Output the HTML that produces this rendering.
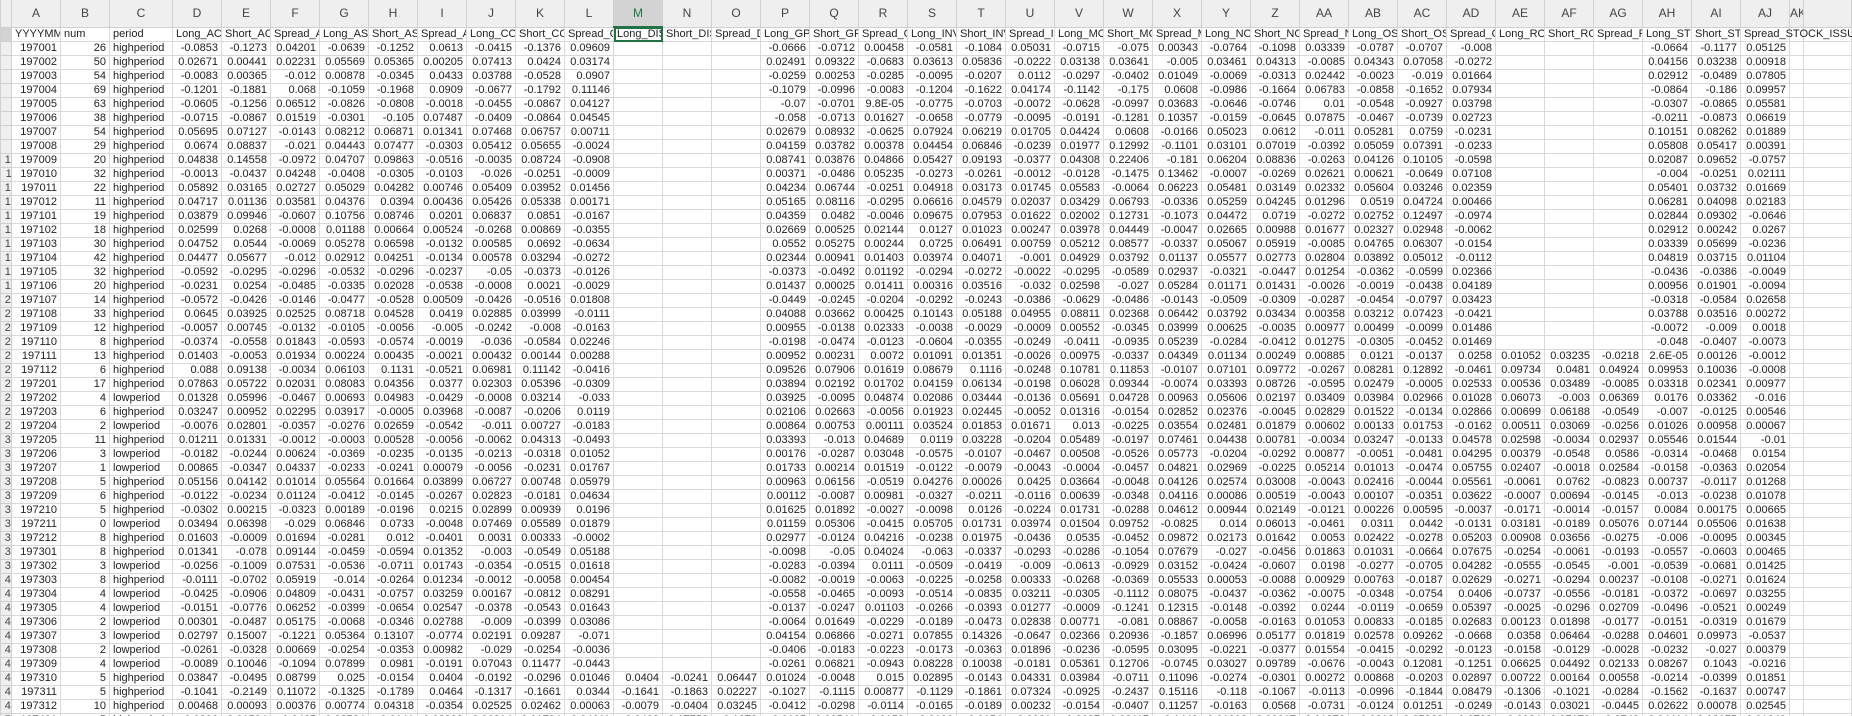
<!DOCTYPE html>
<html><head><meta charset="utf-8"><style>
html,body{margin:0;padding:0;background:#fff;width:1852px;height:716px;overflow:hidden}
table{border-collapse:collapse;table-layout:fixed;font-family:"Liberation Sans",sans-serif;font-size:11px;color:#222;width:1852px}
td,th{padding:0 3px 0 2px;height:13px;line-height:13px;border:1px solid #d9d9d9;white-space:nowrap;overflow:hidden;text-align:right}
thead th{height:22px;line-height:26px;background:#efefef;color:#444;font-weight:normal;font-size:12px;text-align:center;border:1px solid #d0d0d0;border-top:none;padding:0}
tbody th{background:#efefef;color:#444;font-weight:normal;text-align:right;padding:0;border-color:#d0d0d0;direction:rtl;text-indent:-6px}
td.l{text-align:left;padding-left:3px}
tr.h td{text-align:left;padding-left:3px}
th.sel{background:#d3d3d3;color:#217346;border-bottom:2px solid #217346}
td.cur{outline:2px solid #217346;outline-offset:-2px;position:relative}
td.vis{overflow:visible}
</style></head><body>
<table>
<colgroup><col style="width:11px"><col style="width:49px"><col style="width:49px"><col style="width:63px">
<col style="width:49px"><col style="width:49px"><col style="width:49px"><col style="width:49px"><col style="width:49px"><col style="width:49px"><col style="width:49px"><col style="width:49px"><col style="width:49px"><col style="width:49px"><col style="width:49px"><col style="width:49px"><col style="width:49px"><col style="width:49px"><col style="width:49px"><col style="width:49px"><col style="width:49px"><col style="width:49px"><col style="width:49px"><col style="width:49px"><col style="width:49px"><col style="width:49px"><col style="width:49px"><col style="width:49px"><col style="width:49px"><col style="width:49px"><col style="width:49px"><col style="width:49px"><col style="width:49px"><col style="width:49px"><col style="width:49px"><col style="width:49px"><col style="width:49px"><col style="width:14px"></colgroup>
<thead><tr><th></th><th>A</th><th>B</th><th>C</th><th>D</th><th>E</th><th>F</th><th>G</th><th>H</th><th>I</th><th>J</th><th>K</th><th>L</th><th class="sel">M</th><th>N</th><th>O</th><th>P</th><th>Q</th><th>R</th><th>S</th><th>T</th><th>U</th><th>V</th><th>W</th><th>X</th><th>Y</th><th>Z</th><th>AA</th><th>AB</th><th>AC</th><th>AD</th><th>AE</th><th>AF</th><th>AG</th><th>AH</th><th>AI</th><th>AJ</th><th>AK</th><th></th></tr></thead>
<tbody>
<tr class="h"><th style="background:#d3d3d3">1</th><td>YYYYMM</td><td>num</td><td>period</td><td>Long_ACCRUALS</td><td>Short_ACCRUALS</td><td>Spread_ACCRUALS</td><td>Long_ASSET</td><td>Short_ASSET</td><td>Spread_ASSET</td><td>Long_COMP</td><td>Short_COMP</td><td>Spread_COMP</td><td class="cur">Long_DISTRESS</td><td>Short_DISTRESS</td><td>Spread_DISTRESS</td><td>Long_GP_A</td><td>Short_GP_A</td><td>Spread_GP</td><td>Long_INV</td><td>Short_INV</td><td>Spread_INV</td><td>Long_MOM</td><td>Short_MOM</td><td>Spread_MOM</td><td>Long_NOA</td><td>Short_NOA</td><td>Spread_NOA</td><td>Long_OSCORE</td><td>Short_OSCORE</td><td>Spread_OSCORE</td><td>Long_ROA</td><td>Short_ROA</td><td>Spread_ROA</td><td>Long_STOCK</td><td>Short_STOCK</td><td class="vis">Spread_STOCK_ISSUE</td><td style="border-left-color:transparent"></td><td></td></tr>
<tr><th>2</th><td>197001</td><td>26</td><td class="l">highperiod</td><td>-0.0853</td><td>-0.1273</td><td>0.04201</td><td>-0.0639</td><td>-0.1252</td><td>0.0613</td><td>-0.0415</td><td>-0.1376</td><td>0.09609</td><td></td><td></td><td></td><td>-0.0666</td><td>-0.0712</td><td>0.00458</td><td>-0.0581</td><td>-0.1084</td><td>0.05031</td><td>-0.0715</td><td>-0.075</td><td>0.00343</td><td>-0.0764</td><td>-0.1098</td><td>0.03339</td><td>-0.0787</td><td>-0.0707</td><td>-0.008</td><td></td><td></td><td></td><td>-0.0664</td><td>-0.1177</td><td>0.05125</td><td></td><td></td></tr>
<tr><th>3</th><td>197002</td><td>50</td><td class="l">highperiod</td><td>0.02671</td><td>0.00441</td><td>0.02231</td><td>0.05569</td><td>0.05365</td><td>0.00205</td><td>0.07413</td><td>0.0424</td><td>0.03174</td><td></td><td></td><td></td><td>0.02491</td><td>0.09322</td><td>-0.0683</td><td>0.03613</td><td>0.05836</td><td>-0.0222</td><td>0.03138</td><td>0.03641</td><td>-0.005</td><td>0.03461</td><td>0.04313</td><td>-0.0085</td><td>0.04343</td><td>0.07058</td><td>-0.0272</td><td></td><td></td><td></td><td>0.04156</td><td>0.03238</td><td>0.00918</td><td></td><td></td></tr>
<tr><th>4</th><td>197003</td><td>54</td><td class="l">highperiod</td><td>-0.0083</td><td>0.00365</td><td>-0.012</td><td>0.00878</td><td>-0.0345</td><td>0.0433</td><td>0.03788</td><td>-0.0528</td><td>0.0907</td><td></td><td></td><td></td><td>-0.0259</td><td>0.00253</td><td>-0.0285</td><td>-0.0095</td><td>-0.0207</td><td>0.0112</td><td>-0.0297</td><td>-0.0402</td><td>0.01049</td><td>-0.0069</td><td>-0.0313</td><td>0.02442</td><td>-0.0023</td><td>-0.019</td><td>0.01664</td><td></td><td></td><td></td><td>0.02912</td><td>-0.0489</td><td>0.07805</td><td></td><td></td></tr>
<tr><th>5</th><td>197004</td><td>69</td><td class="l">highperiod</td><td>-0.1201</td><td>-0.1881</td><td>0.068</td><td>-0.1059</td><td>-0.1968</td><td>0.0909</td><td>-0.0677</td><td>-0.1792</td><td>0.11146</td><td></td><td></td><td></td><td>-0.1079</td><td>-0.0996</td><td>-0.0083</td><td>-0.1204</td><td>-0.1622</td><td>0.04174</td><td>-0.1142</td><td>-0.175</td><td>0.0608</td><td>-0.0986</td><td>-0.1664</td><td>0.06783</td><td>-0.0858</td><td>-0.1652</td><td>0.07934</td><td></td><td></td><td></td><td>-0.0864</td><td>-0.186</td><td>0.09957</td><td></td><td></td></tr>
<tr><th>6</th><td>197005</td><td>63</td><td class="l">highperiod</td><td>-0.0605</td><td>-0.1256</td><td>0.06512</td><td>-0.0826</td><td>-0.0808</td><td>-0.0018</td><td>-0.0455</td><td>-0.0867</td><td>0.04127</td><td></td><td></td><td></td><td>-0.07</td><td>-0.0701</td><td>9.8E-05</td><td>-0.0775</td><td>-0.0703</td><td>-0.0072</td><td>-0.0628</td><td>-0.0997</td><td>0.03683</td><td>-0.0646</td><td>-0.0746</td><td>0.01</td><td>-0.0548</td><td>-0.0927</td><td>0.03798</td><td></td><td></td><td></td><td>-0.0307</td><td>-0.0865</td><td>0.05581</td><td></td><td></td></tr>
<tr><th>7</th><td>197006</td><td>38</td><td class="l">highperiod</td><td>-0.0715</td><td>-0.0867</td><td>0.01519</td><td>-0.0301</td><td>-0.105</td><td>0.07487</td><td>-0.0409</td><td>-0.0864</td><td>0.04545</td><td></td><td></td><td></td><td>-0.058</td><td>-0.0713</td><td>0.01627</td><td>-0.0658</td><td>-0.0779</td><td>-0.0095</td><td>-0.0191</td><td>-0.1281</td><td>0.10357</td><td>-0.0159</td><td>-0.0645</td><td>0.07875</td><td>-0.0467</td><td>-0.0739</td><td>0.02723</td><td></td><td></td><td></td><td>-0.0211</td><td>-0.0873</td><td>0.06619</td><td></td><td></td></tr>
<tr><th>8</th><td>197007</td><td>54</td><td class="l">highperiod</td><td>0.05695</td><td>0.07127</td><td>-0.0143</td><td>0.08212</td><td>0.06871</td><td>0.01341</td><td>0.07468</td><td>0.06757</td><td>0.00711</td><td></td><td></td><td></td><td>0.02679</td><td>0.08932</td><td>-0.0625</td><td>0.07924</td><td>0.06219</td><td>0.01705</td><td>0.04424</td><td>0.0608</td><td>-0.0166</td><td>0.05023</td><td>0.0612</td><td>-0.011</td><td>0.05281</td><td>0.0759</td><td>-0.0231</td><td></td><td></td><td></td><td>0.10151</td><td>0.08262</td><td>0.01889</td><td></td><td></td></tr>
<tr><th>9</th><td>197008</td><td>29</td><td class="l">highperiod</td><td>0.0674</td><td>0.08837</td><td>-0.021</td><td>0.04443</td><td>0.07477</td><td>-0.0303</td><td>0.05412</td><td>0.05655</td><td>-0.0024</td><td></td><td></td><td></td><td>0.04159</td><td>0.03782</td><td>0.00378</td><td>0.04454</td><td>0.06846</td><td>-0.0239</td><td>0.01977</td><td>0.12992</td><td>-0.1101</td><td>0.03101</td><td>0.07019</td><td>-0.0392</td><td>0.05059</td><td>0.07391</td><td>-0.0233</td><td></td><td></td><td></td><td>0.05808</td><td>0.05417</td><td>0.00391</td><td></td><td></td></tr>
<tr><th>10</th><td>197009</td><td>20</td><td class="l">highperiod</td><td>0.04838</td><td>0.14558</td><td>-0.0972</td><td>0.04707</td><td>0.09863</td><td>-0.0516</td><td>-0.0035</td><td>0.08724</td><td>-0.0908</td><td></td><td></td><td></td><td>0.08741</td><td>0.03876</td><td>0.04866</td><td>0.05427</td><td>0.09193</td><td>-0.0377</td><td>0.04308</td><td>0.22406</td><td>-0.181</td><td>0.06204</td><td>0.08836</td><td>-0.0263</td><td>0.04126</td><td>0.10105</td><td>-0.0598</td><td></td><td></td><td></td><td>0.02087</td><td>0.09652</td><td>-0.0757</td><td></td><td></td></tr>
<tr><th>11</th><td>197010</td><td>32</td><td class="l">highperiod</td><td>-0.0013</td><td>-0.0437</td><td>0.04248</td><td>-0.0408</td><td>-0.0305</td><td>-0.0103</td><td>-0.026</td><td>-0.0251</td><td>-0.0009</td><td></td><td></td><td></td><td>0.00371</td><td>-0.0486</td><td>0.05235</td><td>-0.0273</td><td>-0.0261</td><td>-0.0012</td><td>-0.0128</td><td>-0.1475</td><td>0.13462</td><td>-0.0007</td><td>-0.0269</td><td>0.02621</td><td>0.00621</td><td>-0.0649</td><td>0.07108</td><td></td><td></td><td></td><td>-0.004</td><td>-0.0251</td><td>0.02111</td><td></td><td></td></tr>
<tr><th>12</th><td>197011</td><td>22</td><td class="l">highperiod</td><td>0.05892</td><td>0.03165</td><td>0.02727</td><td>0.05029</td><td>0.04282</td><td>0.00746</td><td>0.05409</td><td>0.03952</td><td>0.01456</td><td></td><td></td><td></td><td>0.04234</td><td>0.06744</td><td>-0.0251</td><td>0.04918</td><td>0.03173</td><td>0.01745</td><td>0.05583</td><td>-0.0064</td><td>0.06223</td><td>0.05481</td><td>0.03149</td><td>0.02332</td><td>0.05604</td><td>0.03246</td><td>0.02359</td><td></td><td></td><td></td><td>0.05401</td><td>0.03732</td><td>0.01669</td><td></td><td></td></tr>
<tr><th>13</th><td>197012</td><td>11</td><td class="l">highperiod</td><td>0.04717</td><td>0.01136</td><td>0.03581</td><td>0.04376</td><td>0.0394</td><td>0.00436</td><td>0.05426</td><td>0.05338</td><td>0.00171</td><td></td><td></td><td></td><td>0.05165</td><td>0.08116</td><td>-0.0295</td><td>0.06616</td><td>0.04579</td><td>0.02037</td><td>0.03429</td><td>0.06793</td><td>-0.0336</td><td>0.05259</td><td>0.04245</td><td>0.01296</td><td>0.0519</td><td>0.04724</td><td>0.00466</td><td></td><td></td><td></td><td>0.06281</td><td>0.04098</td><td>0.02183</td><td></td><td></td></tr>
<tr><th>14</th><td>197101</td><td>19</td><td class="l">highperiod</td><td>0.03879</td><td>0.09946</td><td>-0.0607</td><td>0.10756</td><td>0.08746</td><td>0.0201</td><td>0.06837</td><td>0.0851</td><td>-0.0167</td><td></td><td></td><td></td><td>0.04359</td><td>0.0482</td><td>-0.0046</td><td>0.09675</td><td>0.07953</td><td>0.01622</td><td>0.02002</td><td>0.12731</td><td>-0.1073</td><td>0.04472</td><td>0.0719</td><td>-0.0272</td><td>0.02752</td><td>0.12497</td><td>-0.0974</td><td></td><td></td><td></td><td>0.02844</td><td>0.09302</td><td>-0.0646</td><td></td><td></td></tr>
<tr><th>15</th><td>197102</td><td>18</td><td class="l">highperiod</td><td>0.02599</td><td>0.0268</td><td>-0.0008</td><td>0.01188</td><td>0.00664</td><td>0.00524</td><td>-0.0268</td><td>0.00869</td><td>-0.0355</td><td></td><td></td><td></td><td>0.02669</td><td>0.00525</td><td>0.02144</td><td>0.0127</td><td>0.01023</td><td>0.00247</td><td>0.03978</td><td>0.04449</td><td>-0.0047</td><td>0.02665</td><td>0.00988</td><td>0.01677</td><td>0.02327</td><td>0.02948</td><td>-0.0062</td><td></td><td></td><td></td><td>0.02912</td><td>0.00242</td><td>0.0267</td><td></td><td></td></tr>
<tr><th>16</th><td>197103</td><td>30</td><td class="l">highperiod</td><td>0.04752</td><td>0.0544</td><td>-0.0069</td><td>0.05278</td><td>0.06598</td><td>-0.0132</td><td>0.00585</td><td>0.0692</td><td>-0.0634</td><td></td><td></td><td></td><td>0.0552</td><td>0.05275</td><td>0.00244</td><td>0.0725</td><td>0.06491</td><td>0.00759</td><td>0.05212</td><td>0.08577</td><td>-0.0337</td><td>0.05067</td><td>0.05919</td><td>-0.0085</td><td>0.04765</td><td>0.06307</td><td>-0.0154</td><td></td><td></td><td></td><td>0.03339</td><td>0.05699</td><td>-0.0236</td><td></td><td></td></tr>
<tr><th>17</th><td>197104</td><td>42</td><td class="l">highperiod</td><td>0.04477</td><td>0.05677</td><td>-0.012</td><td>0.02912</td><td>0.04251</td><td>-0.0134</td><td>0.00578</td><td>0.03294</td><td>-0.0272</td><td></td><td></td><td></td><td>0.02344</td><td>0.00941</td><td>0.01403</td><td>0.03974</td><td>0.04071</td><td>-0.001</td><td>0.04929</td><td>0.03792</td><td>0.01137</td><td>0.05577</td><td>0.02773</td><td>0.02804</td><td>0.03892</td><td>0.05012</td><td>-0.0112</td><td></td><td></td><td></td><td>0.04819</td><td>0.03715</td><td>0.01104</td><td></td><td></td></tr>
<tr><th>18</th><td>197105</td><td>32</td><td class="l">highperiod</td><td>-0.0592</td><td>-0.0295</td><td>-0.0296</td><td>-0.0532</td><td>-0.0296</td><td>-0.0237</td><td>-0.05</td><td>-0.0373</td><td>-0.0126</td><td></td><td></td><td></td><td>-0.0373</td><td>-0.0492</td><td>0.01192</td><td>-0.0294</td><td>-0.0272</td><td>-0.0022</td><td>-0.0295</td><td>-0.0589</td><td>0.02937</td><td>-0.0321</td><td>-0.0447</td><td>0.01254</td><td>-0.0362</td><td>-0.0599</td><td>0.02366</td><td></td><td></td><td></td><td>-0.0436</td><td>-0.0386</td><td>-0.0049</td><td></td><td></td></tr>
<tr><th>19</th><td>197106</td><td>20</td><td class="l">highperiod</td><td>-0.0231</td><td>0.0254</td><td>-0.0485</td><td>-0.0335</td><td>0.02028</td><td>-0.0538</td><td>-0.0008</td><td>0.0021</td><td>-0.0029</td><td></td><td></td><td></td><td>0.01437</td><td>0.00025</td><td>0.01411</td><td>0.00316</td><td>0.03516</td><td>-0.032</td><td>0.02598</td><td>-0.027</td><td>0.05284</td><td>0.01171</td><td>0.01431</td><td>-0.0026</td><td>-0.0019</td><td>-0.0438</td><td>0.04189</td><td></td><td></td><td></td><td>0.00956</td><td>0.01901</td><td>-0.0094</td><td></td><td></td></tr>
<tr><th>20</th><td>197107</td><td>14</td><td class="l">highperiod</td><td>-0.0572</td><td>-0.0426</td><td>-0.0146</td><td>-0.0477</td><td>-0.0528</td><td>0.00509</td><td>-0.0426</td><td>-0.0516</td><td>0.01808</td><td></td><td></td><td></td><td>-0.0449</td><td>-0.0245</td><td>-0.0204</td><td>-0.0292</td><td>-0.0243</td><td>-0.0386</td><td>-0.0629</td><td>-0.0486</td><td>-0.0143</td><td>-0.0509</td><td>-0.0309</td><td>-0.0287</td><td>-0.0454</td><td>-0.0797</td><td>0.03423</td><td></td><td></td><td></td><td>-0.0318</td><td>-0.0584</td><td>0.02658</td><td></td><td></td></tr>
<tr><th>21</th><td>197108</td><td>33</td><td class="l">highperiod</td><td>0.0645</td><td>0.03925</td><td>0.02525</td><td>0.08718</td><td>0.04528</td><td>0.0419</td><td>0.02885</td><td>0.03999</td><td>-0.0111</td><td></td><td></td><td></td><td>0.04088</td><td>0.03662</td><td>0.00425</td><td>0.10143</td><td>0.05188</td><td>0.04955</td><td>0.08811</td><td>0.02368</td><td>0.06442</td><td>0.03792</td><td>0.03434</td><td>0.00358</td><td>0.03212</td><td>0.07423</td><td>-0.0421</td><td></td><td></td><td></td><td>0.03788</td><td>0.03516</td><td>0.00272</td><td></td><td></td></tr>
<tr><th>22</th><td>197109</td><td>12</td><td class="l">highperiod</td><td>-0.0057</td><td>0.00745</td><td>-0.0132</td><td>-0.0105</td><td>-0.0056</td><td>-0.005</td><td>-0.0242</td><td>-0.008</td><td>-0.0163</td><td></td><td></td><td></td><td>0.00955</td><td>-0.0138</td><td>0.02333</td><td>-0.0038</td><td>-0.0029</td><td>-0.0009</td><td>0.00552</td><td>-0.0345</td><td>0.03999</td><td>0.00625</td><td>-0.0035</td><td>0.00977</td><td>0.00499</td><td>-0.0099</td><td>0.01486</td><td></td><td></td><td></td><td>-0.0072</td><td>-0.009</td><td>0.0018</td><td></td><td></td></tr>
<tr><th>23</th><td>197110</td><td>8</td><td class="l">highperiod</td><td>-0.0374</td><td>-0.0558</td><td>0.01843</td><td>-0.0593</td><td>-0.0574</td><td>-0.0019</td><td>-0.036</td><td>-0.0584</td><td>0.02246</td><td></td><td></td><td></td><td>-0.0198</td><td>-0.0474</td><td>-0.0123</td><td>-0.0604</td><td>-0.0355</td><td>-0.0249</td><td>-0.0411</td><td>-0.0935</td><td>0.05239</td><td>-0.0284</td><td>-0.0412</td><td>0.01275</td><td>-0.0305</td><td>-0.0452</td><td>0.01469</td><td></td><td></td><td></td><td>-0.048</td><td>-0.0407</td><td>-0.0073</td><td></td><td></td></tr>
<tr><th>24</th><td>197111</td><td>13</td><td class="l">highperiod</td><td>0.01403</td><td>-0.0053</td><td>0.01934</td><td>0.00224</td><td>0.00435</td><td>-0.0021</td><td>0.00432</td><td>0.00144</td><td>0.00288</td><td></td><td></td><td></td><td>0.00952</td><td>0.00231</td><td>0.0072</td><td>0.01091</td><td>0.01351</td><td>-0.0026</td><td>0.00975</td><td>-0.0337</td><td>0.04349</td><td>0.01134</td><td>0.00249</td><td>0.00885</td><td>0.0121</td><td>-0.0137</td><td>0.0258</td><td>0.01052</td><td>0.03235</td><td>-0.0218</td><td>2.6E-05</td><td>0.00126</td><td>-0.0012</td><td></td><td></td></tr>
<tr><th>25</th><td>197112</td><td>6</td><td class="l">highperiod</td><td>0.088</td><td>0.09138</td><td>-0.0034</td><td>0.06103</td><td>0.1131</td><td>-0.0521</td><td>0.06981</td><td>0.11142</td><td>-0.0416</td><td></td><td></td><td></td><td>0.09526</td><td>0.07906</td><td>0.01619</td><td>0.08679</td><td>0.1116</td><td>-0.0248</td><td>0.10781</td><td>0.11853</td><td>-0.0107</td><td>0.07101</td><td>0.09772</td><td>-0.0267</td><td>0.08281</td><td>0.12892</td><td>-0.0461</td><td>0.09734</td><td>0.0481</td><td>0.04924</td><td>0.09953</td><td>0.10036</td><td>-0.0008</td><td></td><td></td></tr>
<tr><th>26</th><td>197201</td><td>17</td><td class="l">highperiod</td><td>0.07863</td><td>0.05722</td><td>0.02031</td><td>0.08083</td><td>0.04356</td><td>0.0377</td><td>0.02303</td><td>0.05396</td><td>-0.0309</td><td></td><td></td><td></td><td>0.03894</td><td>0.02192</td><td>0.01702</td><td>0.04159</td><td>0.06134</td><td>-0.0198</td><td>0.06028</td><td>0.09344</td><td>-0.0074</td><td>0.03393</td><td>0.08726</td><td>-0.0595</td><td>0.02479</td><td>-0.0005</td><td>0.02533</td><td>0.00536</td><td>0.03489</td><td>-0.0085</td><td>0.03318</td><td>0.02341</td><td>0.00977</td><td></td><td></td></tr>
<tr><th>27</th><td>197202</td><td>4</td><td class="l">lowperiod</td><td>0.01328</td><td>0.05996</td><td>-0.0467</td><td>0.00693</td><td>0.04983</td><td>-0.0429</td><td>-0.0008</td><td>0.03214</td><td>-0.033</td><td></td><td></td><td></td><td>0.03925</td><td>-0.0095</td><td>0.04874</td><td>0.02086</td><td>0.03444</td><td>-0.0136</td><td>0.05691</td><td>0.04728</td><td>0.00963</td><td>0.05606</td><td>0.02197</td><td>0.03409</td><td>0.03984</td><td>0.02966</td><td>0.01028</td><td>0.06073</td><td>-0.003</td><td>0.06369</td><td>0.0176</td><td>0.03362</td><td>-0.016</td><td></td><td></td></tr>
<tr><th>28</th><td>197203</td><td>6</td><td class="l">highperiod</td><td>0.03247</td><td>0.00952</td><td>0.02295</td><td>0.03917</td><td>-0.0005</td><td>0.03968</td><td>-0.0087</td><td>-0.0206</td><td>0.0119</td><td></td><td></td><td></td><td>0.02106</td><td>0.02663</td><td>-0.0056</td><td>0.01923</td><td>0.02445</td><td>-0.0052</td><td>0.01316</td><td>-0.0154</td><td>0.02852</td><td>0.02376</td><td>-0.0045</td><td>0.02829</td><td>0.01522</td><td>-0.0134</td><td>0.02866</td><td>0.00699</td><td>0.06188</td><td>-0.0549</td><td>-0.007</td><td>-0.0125</td><td>0.00546</td><td></td><td></td></tr>
<tr><th>29</th><td>197204</td><td>2</td><td class="l">lowperiod</td><td>-0.0076</td><td>0.02801</td><td>-0.0357</td><td>-0.0276</td><td>0.02659</td><td>-0.0542</td><td>-0.011</td><td>0.00727</td><td>-0.0183</td><td></td><td></td><td></td><td>0.00864</td><td>0.00753</td><td>0.00111</td><td>0.03524</td><td>0.01853</td><td>0.01671</td><td>0.013</td><td>-0.0225</td><td>0.03554</td><td>0.02481</td><td>0.01879</td><td>0.00602</td><td>0.00133</td><td>0.01753</td><td>-0.0162</td><td>0.00511</td><td>0.03069</td><td>-0.0256</td><td>0.01026</td><td>0.00958</td><td>0.00067</td><td></td><td></td></tr>
<tr><th>30</th><td>197205</td><td>11</td><td class="l">highperiod</td><td>0.01211</td><td>0.01331</td><td>-0.0012</td><td>-0.0003</td><td>0.00528</td><td>-0.0056</td><td>-0.0062</td><td>0.04313</td><td>-0.0493</td><td></td><td></td><td></td><td>0.03393</td><td>-0.013</td><td>0.04689</td><td>0.0119</td><td>0.03228</td><td>-0.0204</td><td>0.05489</td><td>-0.0197</td><td>0.07461</td><td>0.04438</td><td>0.00781</td><td>-0.0034</td><td>0.03247</td><td>-0.0133</td><td>0.04578</td><td>0.02598</td><td>-0.0034</td><td>0.02937</td><td>0.05546</td><td>0.01544</td><td>-0.01</td><td></td><td></td></tr>
<tr><th>31</th><td>197206</td><td>3</td><td class="l">lowperiod</td><td>-0.0182</td><td>-0.0244</td><td>0.00624</td><td>-0.0369</td><td>-0.0235</td><td>-0.0135</td><td>-0.0213</td><td>-0.0318</td><td>0.01052</td><td></td><td></td><td></td><td>0.00176</td><td>-0.0287</td><td>0.03048</td><td>-0.0575</td><td>-0.0107</td><td>-0.0467</td><td>0.00508</td><td>-0.0526</td><td>0.05773</td><td>-0.0204</td><td>-0.0292</td><td>0.00877</td><td>-0.0051</td><td>-0.0481</td><td>0.04295</td><td>0.00379</td><td>-0.0548</td><td>0.0586</td><td>-0.0314</td><td>-0.0468</td><td>0.0154</td><td></td><td></td></tr>
<tr><th>32</th><td>197207</td><td>1</td><td class="l">lowperiod</td><td>0.00865</td><td>-0.0347</td><td>0.04337</td><td>-0.0233</td><td>-0.0241</td><td>0.00079</td><td>-0.0056</td><td>-0.0231</td><td>0.01767</td><td></td><td></td><td></td><td>0.01733</td><td>0.00214</td><td>0.01519</td><td>-0.0122</td><td>-0.0079</td><td>-0.0043</td><td>-0.0004</td><td>-0.0457</td><td>0.04821</td><td>0.02969</td><td>-0.0225</td><td>0.05214</td><td>0.01013</td><td>-0.0474</td><td>0.05755</td><td>0.02407</td><td>-0.0018</td><td>0.02584</td><td>-0.0158</td><td>-0.0363</td><td>0.02054</td><td></td><td></td></tr>
<tr><th>33</th><td>197208</td><td>5</td><td class="l">highperiod</td><td>0.05156</td><td>0.04142</td><td>0.01014</td><td>0.05564</td><td>0.01664</td><td>0.03899</td><td>0.06727</td><td>0.00748</td><td>0.05979</td><td></td><td></td><td></td><td>0.00963</td><td>0.06156</td><td>-0.0519</td><td>0.04276</td><td>0.00026</td><td>0.0425</td><td>0.03664</td><td>-0.0048</td><td>0.04126</td><td>0.02574</td><td>0.03008</td><td>-0.0043</td><td>0.02416</td><td>-0.0044</td><td>0.05561</td><td>-0.0061</td><td>0.0762</td><td>-0.0823</td><td>0.00737</td><td>-0.0117</td><td>0.01268</td><td></td><td></td></tr>
<tr><th>34</th><td>197209</td><td>6</td><td class="l">highperiod</td><td>-0.0122</td><td>-0.0234</td><td>0.01124</td><td>-0.0412</td><td>-0.0145</td><td>-0.0267</td><td>0.02823</td><td>-0.0181</td><td>0.04634</td><td></td><td></td><td></td><td>0.00112</td><td>-0.0087</td><td>0.00981</td><td>-0.0327</td><td>-0.0211</td><td>-0.0116</td><td>0.00639</td><td>-0.0348</td><td>0.04116</td><td>0.00086</td><td>0.00519</td><td>-0.0043</td><td>0.00107</td><td>-0.0351</td><td>0.03622</td><td>-0.0007</td><td>0.00694</td><td>-0.0145</td><td>-0.013</td><td>-0.0238</td><td>0.01078</td><td></td><td></td></tr>
<tr><th>35</th><td>197210</td><td>5</td><td class="l">highperiod</td><td>-0.0302</td><td>0.00215</td><td>-0.0323</td><td>0.00189</td><td>-0.0196</td><td>0.0215</td><td>0.02899</td><td>0.00939</td><td>0.0196</td><td></td><td></td><td></td><td>0.01625</td><td>0.01892</td><td>-0.0027</td><td>-0.0098</td><td>0.0126</td><td>-0.0224</td><td>0.01731</td><td>-0.0288</td><td>0.04612</td><td>0.00944</td><td>0.02149</td><td>-0.0121</td><td>0.00226</td><td>0.00595</td><td>-0.0037</td><td>-0.0171</td><td>-0.0014</td><td>-0.0157</td><td>0.0084</td><td>0.00175</td><td>0.00665</td><td></td><td></td></tr>
<tr><th>36</th><td>197211</td><td>0</td><td class="l">lowperiod</td><td>0.03494</td><td>0.06398</td><td>-0.029</td><td>0.06846</td><td>0.0733</td><td>-0.0048</td><td>0.07469</td><td>0.05589</td><td>0.01879</td><td></td><td></td><td></td><td>0.01159</td><td>0.05306</td><td>-0.0415</td><td>0.05705</td><td>0.01731</td><td>0.03974</td><td>0.01504</td><td>0.09752</td><td>-0.0825</td><td>0.014</td><td>0.06013</td><td>-0.0461</td><td>0.0311</td><td>0.0442</td><td>-0.0131</td><td>0.03181</td><td>-0.0189</td><td>0.05076</td><td>0.07144</td><td>0.05506</td><td>0.01638</td><td></td><td></td></tr>
<tr><th>37</th><td>197212</td><td>8</td><td class="l">highperiod</td><td>0.01603</td><td>-0.0009</td><td>0.01694</td><td>-0.0281</td><td>0.012</td><td>-0.0401</td><td>0.0031</td><td>0.00333</td><td>-0.0002</td><td></td><td></td><td></td><td>0.02977</td><td>-0.0124</td><td>0.04216</td><td>-0.0238</td><td>0.01975</td><td>-0.0436</td><td>0.0535</td><td>-0.0452</td><td>0.09872</td><td>0.02173</td><td>0.01642</td><td>0.0053</td><td>0.02422</td><td>-0.0278</td><td>0.05203</td><td>0.00908</td><td>0.03656</td><td>-0.0275</td><td>-0.006</td><td>-0.0095</td><td>0.00345</td><td></td><td></td></tr>
<tr><th>38</th><td>197301</td><td>8</td><td class="l">highperiod</td><td>0.01341</td><td>-0.078</td><td>0.09144</td><td>-0.0459</td><td>-0.0594</td><td>0.01352</td><td>-0.003</td><td>-0.0549</td><td>0.05188</td><td></td><td></td><td></td><td>-0.0098</td><td>-0.05</td><td>0.04024</td><td>-0.063</td><td>-0.0337</td><td>-0.0293</td><td>-0.0286</td><td>-0.1054</td><td>0.07679</td><td>-0.027</td><td>-0.0456</td><td>0.01863</td><td>0.01031</td><td>-0.0664</td><td>0.07675</td><td>-0.0254</td><td>-0.0061</td><td>-0.0193</td><td>-0.0557</td><td>-0.0603</td><td>0.00465</td><td></td><td></td></tr>
<tr><th>39</th><td>197302</td><td>3</td><td class="l">lowperiod</td><td>-0.0256</td><td>-0.1009</td><td>0.07531</td><td>-0.0536</td><td>-0.0711</td><td>0.01743</td><td>-0.0354</td><td>-0.0515</td><td>0.01618</td><td></td><td></td><td></td><td>-0.0283</td><td>-0.0394</td><td>0.0111</td><td>-0.0509</td><td>-0.0419</td><td>-0.009</td><td>-0.0613</td><td>-0.0929</td><td>0.03152</td><td>-0.0424</td><td>-0.0607</td><td>0.0198</td><td>-0.0277</td><td>-0.0705</td><td>0.04282</td><td>-0.0555</td><td>-0.0545</td><td>-0.001</td><td>-0.0539</td><td>-0.0681</td><td>0.01425</td><td></td><td></td></tr>
<tr><th>40</th><td>197303</td><td>8</td><td class="l">highperiod</td><td>-0.0111</td><td>-0.0702</td><td>0.05919</td><td>-0.014</td><td>-0.0264</td><td>0.01234</td><td>-0.0012</td><td>-0.0058</td><td>0.00454</td><td></td><td></td><td></td><td>-0.0082</td><td>-0.0019</td><td>-0.0063</td><td>-0.0225</td><td>-0.0258</td><td>0.00333</td><td>-0.0268</td><td>-0.0369</td><td>0.05533</td><td>0.00053</td><td>-0.0088</td><td>0.00929</td><td>0.00763</td><td>-0.0187</td><td>0.02629</td><td>-0.0271</td><td>-0.0294</td><td>0.00237</td><td>-0.0108</td><td>-0.0271</td><td>0.01624</td><td></td><td></td></tr>
<tr><th>41</th><td>197304</td><td>4</td><td class="l">lowperiod</td><td>-0.0425</td><td>-0.0906</td><td>0.04809</td><td>-0.0431</td><td>-0.0757</td><td>0.03259</td><td>0.00167</td><td>-0.0812</td><td>0.08291</td><td></td><td></td><td></td><td>-0.0558</td><td>-0.0465</td><td>-0.0093</td><td>-0.0514</td><td>-0.0835</td><td>0.03211</td><td>-0.0305</td><td>-0.1112</td><td>0.08075</td><td>-0.0437</td><td>-0.0362</td><td>-0.0075</td><td>-0.0348</td><td>-0.0754</td><td>0.0406</td><td>-0.0737</td><td>-0.0556</td><td>-0.0181</td><td>-0.0372</td><td>-0.0697</td><td>0.03255</td><td></td><td></td></tr>
<tr><th>42</th><td>197305</td><td>4</td><td class="l">lowperiod</td><td>-0.0151</td><td>-0.0776</td><td>0.06252</td><td>-0.0399</td><td>-0.0654</td><td>0.02547</td><td>-0.0378</td><td>-0.0543</td><td>0.01643</td><td></td><td></td><td></td><td>-0.0137</td><td>-0.0247</td><td>0.01103</td><td>-0.0266</td><td>-0.0393</td><td>0.01277</td><td>-0.0009</td><td>-0.1241</td><td>0.12315</td><td>-0.0148</td><td>-0.0392</td><td>0.0244</td><td>-0.0119</td><td>-0.0659</td><td>0.05397</td><td>-0.0025</td><td>-0.0296</td><td>0.02709</td><td>-0.0496</td><td>-0.0521</td><td>0.00249</td><td></td><td></td></tr>
<tr><th>43</th><td>197306</td><td>2</td><td class="l">lowperiod</td><td>0.00301</td><td>-0.0487</td><td>0.05175</td><td>-0.0068</td><td>-0.0346</td><td>0.02788</td><td>-0.009</td><td>-0.0399</td><td>0.03086</td><td></td><td></td><td></td><td>-0.0064</td><td>0.01649</td><td>-0.0229</td><td>-0.0189</td><td>-0.0473</td><td>0.02838</td><td>0.00771</td><td>-0.081</td><td>0.08867</td><td>-0.0058</td><td>-0.0163</td><td>0.01053</td><td>0.00833</td><td>-0.0185</td><td>0.02683</td><td>0.00123</td><td>0.01898</td><td>-0.0177</td><td>-0.0151</td><td>-0.0319</td><td>0.01679</td><td></td><td></td></tr>
<tr><th>44</th><td>197307</td><td>3</td><td class="l">lowperiod</td><td>0.02797</td><td>0.15007</td><td>-0.1221</td><td>0.05364</td><td>0.13107</td><td>-0.0774</td><td>0.02191</td><td>0.09287</td><td>-0.071</td><td></td><td></td><td></td><td>0.04154</td><td>0.06866</td><td>-0.0271</td><td>0.07855</td><td>0.14326</td><td>-0.0647</td><td>0.02366</td><td>0.20936</td><td>-0.1857</td><td>0.06996</td><td>0.05177</td><td>0.01819</td><td>0.02578</td><td>0.09262</td><td>-0.0668</td><td>0.0358</td><td>0.06464</td><td>-0.0288</td><td>0.04601</td><td>0.09973</td><td>-0.0537</td><td></td><td></td></tr>
<tr><th>45</th><td>197308</td><td>2</td><td class="l">lowperiod</td><td>-0.0261</td><td>-0.0328</td><td>0.00669</td><td>-0.0254</td><td>-0.0353</td><td>0.00982</td><td>-0.029</td><td>-0.0254</td><td>-0.0036</td><td></td><td></td><td></td><td>-0.0406</td><td>-0.0183</td><td>-0.0223</td><td>-0.0173</td><td>-0.0363</td><td>0.01896</td><td>-0.0236</td><td>-0.0595</td><td>0.03095</td><td>-0.0221</td><td>-0.0377</td><td>0.01554</td><td>-0.0415</td><td>-0.0292</td><td>-0.0123</td><td>-0.0158</td><td>-0.0129</td><td>-0.0028</td><td>-0.0232</td><td>-0.027</td><td>0.00379</td><td></td><td></td></tr>
<tr><th>46</th><td>197309</td><td>4</td><td class="l">lowperiod</td><td>-0.0089</td><td>0.10046</td><td>-0.1094</td><td>0.07899</td><td>0.0981</td><td>-0.0191</td><td>0.07043</td><td>0.11477</td><td>-0.0443</td><td></td><td></td><td></td><td>-0.0261</td><td>0.06821</td><td>-0.0943</td><td>0.08228</td><td>0.10038</td><td>-0.0181</td><td>0.05361</td><td>0.12706</td><td>-0.0745</td><td>0.03027</td><td>0.09789</td><td>-0.0676</td><td>-0.0043</td><td>0.12081</td><td>-0.1251</td><td>0.06625</td><td>0.04492</td><td>0.02133</td><td>0.08267</td><td>0.1043</td><td>-0.0216</td><td></td><td></td></tr>
<tr><th>47</th><td>197310</td><td>5</td><td class="l">highperiod</td><td>0.03847</td><td>-0.0495</td><td>0.08799</td><td>0.025</td><td>-0.0154</td><td>0.0404</td><td>-0.0192</td><td>-0.0296</td><td>0.01046</td><td>0.0404</td><td>-0.0241</td><td>0.06447</td><td>0.01024</td><td>-0.0048</td><td>0.015</td><td>0.02895</td><td>-0.0143</td><td>0.04331</td><td>0.03984</td><td>-0.0711</td><td>0.11096</td><td>-0.0274</td><td>-0.0301</td><td>0.00272</td><td>0.00868</td><td>-0.0203</td><td>0.02897</td><td>0.00722</td><td>0.00164</td><td>0.00558</td><td>-0.0214</td><td>-0.0399</td><td>0.01851</td><td></td><td></td></tr>
<tr><th>48</th><td>197311</td><td>5</td><td class="l">highperiod</td><td>-0.1041</td><td>-0.2149</td><td>0.11072</td><td>-0.1325</td><td>-0.1789</td><td>0.0464</td><td>-0.1317</td><td>-0.1661</td><td>0.0344</td><td>-0.1641</td><td>-0.1863</td><td>0.02227</td><td>-0.1027</td><td>-0.1115</td><td>0.00877</td><td>-0.1129</td><td>-0.1861</td><td>0.07324</td><td>-0.0925</td><td>-0.2437</td><td>0.15116</td><td>-0.118</td><td>-0.1067</td><td>-0.0113</td><td>-0.0996</td><td>-0.1844</td><td>0.08479</td><td>-0.1306</td><td>-0.1021</td><td>-0.0284</td><td>-0.1562</td><td>-0.1637</td><td>0.00747</td><td></td><td></td></tr>
<tr><th>49</th><td>197312</td><td>10</td><td class="l">highperiod</td><td>0.00468</td><td>0.00093</td><td>0.00376</td><td>0.00774</td><td>0.04318</td><td>-0.0354</td><td>0.02525</td><td>0.02462</td><td>0.00063</td><td>-0.0079</td><td>-0.0404</td><td>0.03245</td><td>-0.0412</td><td>-0.0298</td><td>-0.0114</td><td>-0.0165</td><td>-0.0189</td><td>0.00232</td><td>-0.0154</td><td>-0.0407</td><td>0.11257</td><td>-0.0163</td><td>0.0568</td><td>-0.0731</td><td>-0.0124</td><td>0.01251</td><td>-0.0249</td><td>-0.0143</td><td>0.03021</td><td>-0.0445</td><td>0.02622</td><td>0.00078</td><td>0.02545</td><td></td><td></td></tr>
<tr><th>50</th><td>197401</td><td>5</td><td class="l">highperiod</td><td>0.0306</td><td>0.01594</td><td>-0.0465</td><td>0.02524</td><td>0.0141</td><td>0.02929</td><td>0.06314</td><td>0.01704</td><td>0.04611</td><td>0.0402</td><td>0.17758</td><td>-0.1378</td><td>0.0105</td><td>0.00541</td><td>0.0159</td><td>0.0106</td><td>0.0154</td><td>-0.0031</td><td>0.0637</td><td>-0.08117</td><td>0.1449</td><td>0.01903</td><td>0.00017</td><td>0.01976</td><td>-0.0212</td><td>0.05262</td><td>-0.0739</td><td>0.0024</td><td>0.07172</td><td>-0.0742</td><td>0.04414</td><td>0.03155</td><td>0.01249</td><td></td><td></td></tr>
</tbody></table>
</body></html>
